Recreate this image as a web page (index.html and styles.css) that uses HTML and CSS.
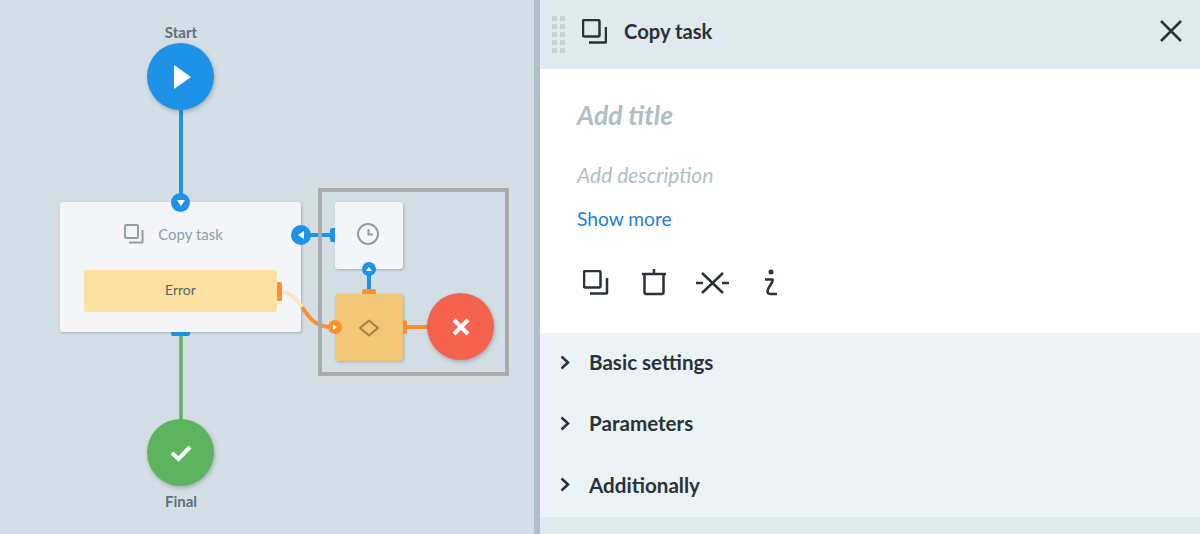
FILE: index.html
```html
<!DOCTYPE html>
<html lang="en">
<head>
    <meta charset="UTF-8">
    <title>Copy task</title>
    <link rel="stylesheet" href="styles.css">
</head>
<body>
    <div class="app">
        <div class="canvas">
            <svg class="wires" width="534" height="534" viewBox="0 0 534 534">
                <path class="wire-blue" d="M181 110V195"/>
                <path class="wire-green" d="M181 336V420"/>
                <path class="wire-blue" d="M301 235H333"/>
                <path class="wire-blue" d="M369 269V290"/>
                <path class="wire-orange" d="M405 327H428"/>
                <path class="wire-fade" d="M282 292C292 293 297 300 302 307"/>
                <path class="wire-orange" d="M302 307C308 316 314 326 330 327"/>
            </svg>

            <div class="selection"></div>

            <div class="node-label label-start">Start</div>
            <div class="circle circle-blue circle-start">
                <svg width="20" height="26" viewBox="0 0 20 26"><path fill="#fff" d="M2 1L19 13L2 25Z"/></svg>
            </div>

            <div class="card card-task">
                <div class="card-title">
                    <svg class="icon-copy-grey" width="20" height="20" viewBox="0 0 20 20">
                        <path d="M2 1H13A1 1 0 0 1 14 2V13A1 1 0 0 1 13 14H2A1 1 0 0 1 1 13V2A1 1 0 0 1 2 1ZM18.500 6V18A.5.5 0 0 1 18 18.500H5"/>
                    </svg>
                    <span>Copy task</span>
                </div>
                <div class="error-box">Error</div>
            </div>

            <div class="card card-timer">
                <svg class="icon-clock" width="24" height="24" viewBox="0 0 24 24">
                    <circle cx="12" cy="12" r="10"/>
                    <path d="M12.500 7V12.500H17"/>
                </svg>
            </div>

            <div class="card card-catch">
                <svg class="icon-diamond" width="22" height="18" viewBox="0 0 22 18">
                    <path d="M11 1.500L20 9L11 16.500L2 9Z"/>
                </svg>
            </div>

            <div class="circle circle-red circle-error">
                <svg width="20" height="20" viewBox="0 0 20 20"><path class="glyph" d="M3 3L17 17M17 3L3 17"/></svg>
            </div>

            <div class="circle circle-green circle-final">
                <svg width="22" height="18" viewBox="0 0 22 18"><path class="glyph" d="M2 9L8.500 15L20 3"/></svg>
            </div>
            <div class="node-label label-final">Final</div>

            <div class="port port-top">
                <svg width="8" height="6" viewBox="0 0 8 6"><path fill="#fff" d="M0 0H8L4 6Z"/></svg>
            </div>
            <div class="port port-left">
                <svg width="6" height="8" viewBox="0 0 6 8"><path fill="#fff" d="M6 0V8L0 4Z"/></svg>
            </div>
            <div class="port port-up">
                <svg width="6" height="4" viewBox="0 0 6 4"><path fill="#fff" d="M0 4H6L3 0Z"/></svg>
            </div>
            <div class="port port-in">
                <svg width="4" height="6" viewBox="0 0 4 6"><path fill="#fff" d="M0 0V6L4 3Z"/></svg>
            </div>

            <div class="tab tab-bottom"></div>
            <div class="tab tab-timer"></div>
            <div class="tab tab-error"></div>
            <div class="tab tab-catch-top"></div>
            <div class="tab tab-catch-right"></div>
        </div>

        <div class="panel">
            <div class="panel-header">
                <div class="grip">
                    <i></i><i></i><i></i><i></i><i></i><i></i><i></i><i></i><i></i><i></i>
                </div>
                <svg class="icon" width="25" height="25" viewBox="0 0 25 25">
                    <path d="M2.500 1H16A1.500 1.500 0 0 1 17.500 2.500V16A1.500 1.500 0 0 1 16 17.500H2.500A1.500 1.500 0 0 1 1 16V2.500A1.500 1.500 0 0 1 2.500 1ZM24 8V23A.5.5 0 0 1 23.500 23.500H7"/>
                </svg>
                <div class="panel-title">Copy task</div>
                <svg class="icon close" width="24" height="24" viewBox="0 0 24 24">
                    <path d="M2 2L22 22M22 2L2 22"/>
                </svg>
            </div>

            <div class="panel-body">
                <div class="add-title">Add title</div>
                <div class="add-desc">Add description</div>
                <a class="show-more">Show more</a>
                <div class="tools">
                    <svg class="icon" width="29" height="25" viewBox="0 0 29 25">
                        <path d="M2.500 1H16A1.500 1.500 0 0 1 17.500 2.500V16A1.500 1.500 0 0 1 16 17.500H2.500A1.500 1.500 0 0 1 1 16V2.500A1.500 1.500 0 0 1 2.500 1ZM24 8V23A.5.5 0 0 1 23.500 23.500H7"/>
                    </svg>
                    <svg class="icon" width="24" height="27" viewBox="0 0 24 27">
                        <path d="M0 5H24M12 5V0M2.500 5V23.500A1.500 1.500 0 0 0 4 25H20A1.500 1.500 0 0 0 21.500 23.500V5"/>
                    </svg>
                    <svg class="icon" width="33" height="24" viewBox="0 0 33 24">
                        <path d="M0 12H7M26 12H33M6 2L27 22M27 2L6 22"/>
                    </svg>
                    <svg class="icon" width="19" height="27" viewBox="0 0 19 27">
                        <circle class="dot" cx="12" cy="3" r="2.500"/>
                        <path d="M6 10.500H13.500C14.500 14 8.500 18 8.500 22.500C8.500 26 13 25 18 25"/>
                    </svg>
                </div>
            </div>

            <div class="sections">
                <div class="section-row">
                    <svg class="chevron" width="10" height="15" viewBox="0 0 10 15"><path d="M1.500 1.500L8 7.500L1.500 13.500"/></svg>
                    <span>Basic settings</span>
                </div>
                <div class="section-row">
                    <svg class="chevron" width="10" height="15" viewBox="0 0 10 15"><path d="M1.500 1.500L8 7.500L1.500 13.500"/></svg>
                    <span>Parameters</span>
                </div>
                <div class="section-row">
                    <svg class="chevron" width="10" height="15" viewBox="0 0 10 15"><path d="M1.500 1.500L8 7.500L1.500 13.500"/></svg>
                    <span>Additionally</span>
                </div>
            </div>
            <div class="panel-footer"></div>
        </div>
    </div>
</body>
</html>
```

FILE: styles.css
```css
html, body {
    margin: 0;
    padding: 0;
}
body {
    font-family: 'Lato', 'Noto Sans', sans-serif;
    width: 1200px;
    height: 534px;
    overflow: hidden;
}
.app {
    display: flex;
    height: 534px;
}

/* diagram */
.canvas {
    position: relative;
    width: 534px;
    flex: none;
    background: #d4dfe5;
    border-right: 6px solid #afbfc7;
}
.wires {
    position: absolute;
    left: 0;
    top: 0;
    z-index: 3;
}
.wires path {
    fill: none;
    stroke-width: 4;
}
.wire-blue {
    stroke: #1e92e6;
}
.wires .wire-green {
    stroke: #5cb45d;
    stroke-width: 3.5;
}
.wire-orange {
    stroke: #fd8f2f;
}
.wire-fade {
    stroke: #fde3cc;
}
.selection {
    position: absolute;
    left: 318px;
    top: 188px;
    width: 183px;
    height: 180px;
    border: 4px solid #aaaaaa;
    z-index: 3;
}
.node-label {
    position: absolute;
    left: 131px;
    width: 100px;
    text-align: center;
    font-size: 15px;
    font-weight: 700;
    color: #5f717c;
    line-height: 20px;
}
.label-start {
    top: 22px;
}
.label-final {
    top: 491px;
}
.circle {
    position: absolute;
    width: 67px;
    height: 67px;
    border-radius: 50%;
    display: flex;
    align-items: center;
    justify-content: center;
    box-shadow: 1px 2px 4px rgba(60, 80, 90, 0.35);
    z-index: 4;
}
.circle-blue {
    background: #1e92e6;
}
.circle-green {
    background: #5cb55e;
}
.circle-red {
    background: #f5634f;
}
.circle-start {
    left: 147px;
    top: 43px;
}
.circle-start svg {
    margin-left: 2px;
}
.circle-final {
    left: 147px;
    top: 419px;
}
.circle-error {
    left: 427px;
    top: 293px;
}
.glyph {
    fill: none;
    stroke: #fff;
    stroke-width: 4;
}
.card {
    position: absolute;
    background: #f3f5f8;
    border-radius: 3px;
    box-shadow: 1px 1px 3px rgba(60, 80, 90, 0.35);
    z-index: 2;
}
.card-task {
    left: 60px;
    top: 202px;
    width: 241px;
    height: 130px;
}
.card-title {
    display: flex;
    align-items: center;
    justify-content: center;
    gap: 14px;
    height: 64px;
    font-size: 15px;
    color: #8f9ea8;
    margin-right: 14px;
}
.icon-copy-grey path {
    fill: none;
    stroke: #8f9ea8;
    stroke-width: 2;
}
.error-box {
    margin: 4px 24px 0;
    height: 42px;
    line-height: 40px;
    background: #fee1a1;
    border-radius: 3px;
    text-align: center;
    font-size: 14px;
    color: #55626b;
}
.card-timer, .card-catch {
    left: 335px;
    width: 68px;
    height: 67px;
    display: flex;
    align-items: center;
    justify-content: center;
}
.card-timer {
    top: 202px;
}
.card-timer svg {
    margin: 0 3px 3px 0;
}
.card-catch {
    top: 294px;
    background: #f3c775;
}
.icon-clock circle, .icon-clock path {
    fill: none;
    stroke: #8f9ea8;
    stroke-width: 2;
}
.icon-diamond path {
    fill: none;
    stroke: #a5813f;
    stroke-width: 2;
    stroke-linejoin: round;
}
.port {
    position: absolute;
    border-radius: 50%;
    display: flex;
    align-items: center;
    justify-content: center;
    background: #1e92e6;
    z-index: 4;
}
.port-top {
    left: 171px;
    top: 193px;
    width: 19px;
    height: 19px;
}
.port-left {
    left: 291px;
    top: 225px;
    width: 20px;
    height: 20px;
}
.port-up {
    left: 362px;
    top: 262px;
    width: 14px;
    height: 14px;
}
.port-in {
    left: 328px;
    top: 320px;
    width: 14px;
    height: 14px;
    background: #fd8f2f;
}
.tab {
    position: absolute;
    z-index: 4;
    background: #fd8f2f;
}
.tab-bottom {
    left: 171px;
    top: 332px;
    width: 19px;
    height: 4px;
    background: #1e92e6;
    border-radius: 0 0 2px 2px;
}
.tab-timer {
    left: 330px;
    top: 228px;
    width: 5px;
    height: 14px;
    background: #1e92e6;
    border-radius: 2px 0 0 2px;
}
.tab-error {
    left: 277px;
    top: 282px;
    width: 5px;
    height: 19px;
    border-radius: 0 2px 2px 0;
}
.tab-catch-top {
    left: 362px;
    top: 289px;
    width: 14px;
    height: 5px;
    border-radius: 2px 2px 0 0;
}
.tab-catch-right {
    left: 403px;
    top: 320px;
    width: 4px;
    height: 14px;
    border-radius: 0 2px 2px 0;
}

/* side panel */
.panel {
    flex: 1;
    display: flex;
    flex-direction: column;
    color: #2a3138;
}
.icon path {
    fill: none;
    stroke: #2a3138;
    stroke-width: 2.5;
}
.icon .dot {
    fill: #2a3138;
}
.panel-header {
    height: 69px;
    background: #dfeaef;
    display: flex;
    align-items: center;
    padding: 0 17px 7px 12px;
    box-sizing: border-box;
}
.grip {
    display: grid;
    grid-template-columns: 5px 5px;
    gap: 3px;
    margin: 7px 17px 0 0;
}
.grip i {
    width: 5px;
    height: 5px;
    background: #c5d2d9;
}
.panel-title {
    flex: 1;
    margin-left: 17px;
    font-size: 20.2px;
    font-weight: 700;
}
.panel-body {
    height: 264px;
    background: #fff;
    padding: 30px 37px 0;
    box-sizing: border-box;
}
.add-title {
    font-size: 26.5px;
    font-weight: 700;
    font-style: italic;
    color: #b0bec5;
    line-height: 32px;
}
.add-desc {
    margin-top: 31px;
    font-size: 21px;
    font-style: italic;
    color: #b0bec5;
    line-height: 26px;
}
.show-more {
    display: block;
    margin-top: 18px;
    font-size: 19.2px;
    color: #1e80dc;
    line-height: 26px;
}
.tools {
    display: flex;
    align-items: center;
    gap: 30px;
    margin-top: 37px;
    padding-left: 6px;
}
.sections {
    height: 184px;
    background: #ecf3f7;
    display: flex;
    flex-direction: column;
    padding-left: 20px;
}
.section-row {
    flex: 1;
    display: flex;
    align-items: center;
    gap: 19px;
    padding-bottom: 3px;
    font-size: 20.6px;
    font-weight: 700;
    color: #2a3138;
}
.chevron path {
    fill: none;
    stroke: #2a3138;
    stroke-width: 2.5;
}
.panel-footer {
    flex: 1;
    background: #dfeaef;
}
```
